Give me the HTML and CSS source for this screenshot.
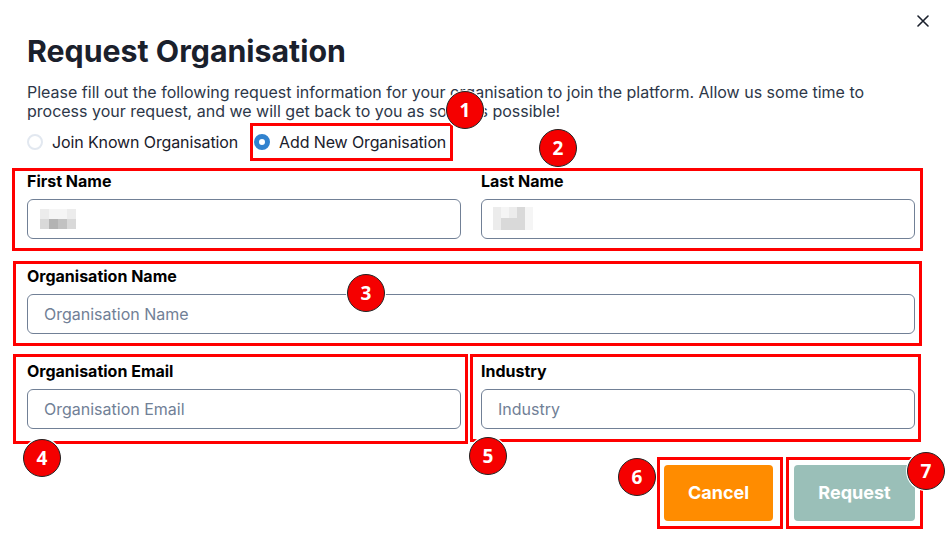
FILE: index.html
```html
<!DOCTYPE html>
<html lang="en">
<head>
<meta charset="utf-8">
<title>Request Organisation</title>
<link rel="stylesheet" href="styles.css">
</head>
<body>
<div class="modal">
  <button class="close" aria-label="Close">
    <svg width="12" height="12" viewBox="0 0 12 12"><path d="M1 1L11 11M11 1L1 11" stroke="#1a202c" stroke-width="1.6" stroke-linecap="round"/></svg>
  </button>
  <h1 class="title">Request Organisation</h1>
  <p class="desc">Please fill out the following request information for your organisation to join the platform. Allow us some time to process your request, and we will get back to you as soon as possible!</p>
  <div class="radios">
    <label class="radio"><span class="dot"></span>Join Known Organisation</label>
    <label class="radio checked"><span class="dot"></span>Add New Organisation</label>
  </div>
  <div class="grid">
    <div class="field">
      <div class="label">First Name</div>
      <div class="input"><span class="blur blur-a"><i class="c1"></i><i class="c0"></i><i class="c0"></i><i class="c1"></i><i class="c2"></i><i class="c4"></i><i class="c3"></i><i class="c2"></i></span></div>
    </div>
    <div class="field">
      <div class="label">Last Name</div>
      <div class="input"><span class="blur blur-b"><i class="c1"></i><i class="c0"></i><i class="c1"></i><i class="c2"></i><i class="c0"></i><i class="c1"></i><i class="c2"></i><i class="c2"></i><i class="c2"></i><i class="c0"></i></span></div>
    </div>
    <div class="field wide">
      <div class="label">Organisation Name</div>
      <div class="input"><span class="ph">Organisation Name</span></div>
    </div>
    <div class="field">
      <div class="label">Organisation Email</div>
      <div class="input"><span class="ph">Organisation Email</span></div>
    </div>
    <div class="field">
      <div class="label">Industry</div>
      <div class="input"><span class="ph">Industry</span></div>
    </div>
  </div>
  <div class="actions">
    <button class="btn cancel">Cancel</button>
    <button class="btn request">Request</button>
  </div>
</div>

<div class="anno box b1"></div>
<div class="anno box b2"></div>
<div class="anno box b3"></div>
<div class="anno box b4"></div>
<div class="anno box b5"></div>
<div class="anno box b6"></div>
<div class="anno box b7"></div>
<div class="anno num n1">1</div>
<div class="anno num n2">2</div>
<div class="anno num n3">3</div>
<div class="anno num n4">4</div>
<div class="anno num n5">5</div>
<div class="anno num n6">6</div>
<div class="anno num n7">7</div>
</body>
</html>
```
FILE: styles.css
```css
* { box-sizing: border-box; }
html, body { margin: 0; padding: 0; background: #fff; }
body {
  font-family: Inter, "Noto Sans", "Liberation Sans", sans-serif;
  color: #1a202c;
  width: 951px;
  height: 552px;
  overflow: hidden;
  position: relative;
}
.modal {
  position: relative;
  padding: 33px 36px 0 27px;
}
.close {
  position: absolute;
  top: 15px;
  left: 917px;
  width: 12px;
  height: 12px;
  padding: 0;
  border: 0;
  background: none;
  display: block;
}
.close svg { display: block; }
.title {
  margin: 0;
  font-size: 30.3px;
  line-height: 36px;
  font-weight: 700;
  color: #1a202c;
}
.desc {
  margin: 14px 0 0;
  font-size: 16px;
  line-height: 19px;
  color: #2d3748;
}
.radios {
  display: flex;
  gap: 16px;
  margin-top: 11px;
  height: 20px;
  align-items: center;
}
.radio {
  display: flex;
  align-items: center;
  gap: 9px;
  font-size: 16px;
  line-height: 20px;
  color: #1a202c;
  letter-spacing: -0.12px;
}
.dot {
  width: 16px;
  height: 16px;
  border-radius: 50%;
  border: 2px solid #e2e8f0;
  background: #fff;
  flex: none;
}
.radio.checked .dot {
  border: 5px solid #3182ce;
  background: #fff;
}
.grid {
  margin-top: 19px;
  display: grid;
  grid-template-columns: 1fr 1fr;
  column-gap: 20px;
  row-gap: 27px;
}
.field.wide { grid-column: 1 / 3; }
.label {
  font-size: 16px;
  line-height: 20px;
  font-weight: 700;
  color: #000;
  margin-bottom: 8px;
}
.input {
  height: 40px;
  border: 1px solid #718096;
  border-radius: 6px;
  display: flex;
  align-items: center;
  padding: 0 0 1px 16px;
  font-size: 16px;
}
.ph { color: #718096; }
.blur {
  display: grid;
  grid-template-rows: 10px 10px;
}
.blur-a {
  grid-template-columns: repeat(4, 9px);
  margin-left: -4px;
}
.blur-b {
  grid-template-columns: repeat(5, 8px);
  grid-template-rows: 11px 12px;
  margin-left: -5px;
}
.blur i { display: block; }
.c0 { background: #f5f5f5; }
.c1 { background: #ececec; }
.c2 { background: #d9d9d9; }
.c3 { background: #c2c2c2; }
.c4 { background: #b3b3b3; }
.actions {
  margin-top: 36px;
  display: flex;
  justify-content: flex-end;
  gap: 21px;
}
.btn {
  height: 56px;
  border: 0;
  border-radius: 4px;
  color: #fff;
  font-family: Inter, "Noto Sans", "Liberation Sans", sans-serif;
  font-size: 18px;
  font-weight: 700;
  padding: 0 0 1px;
}
.cancel { width: 109px; background: #ff8c00; }
.request { width: 121px; background: #9abfb8; }

/* annotation overlay */
.anno { position: absolute; }
.box { border: 3px solid #ff0000; }
.b1 { left: 250px; top: 123px; width: 203px; height: 38px; }
.b2 { left: 12px; top: 168px; width: 911px; height: 83px; }
.b3 { left: 13px; top: 261px; width: 909px; height: 85px; }
.b4 { left: 13px; top: 354px; width: 455px; height: 90px; }
.b5 { left: 470px; top: 354px; width: 451px; height: 88px; }
.b6 { left: 657px; top: 457px; width: 126px; height: 72px; }
.b7 { left: 786px; top: 457px; width: 137px; height: 72px; }
.num {
  width: 38px;
  height: 38px;
  border-radius: 50%;
  background: #f50000;
  border: 1px solid #222;
  box-shadow: 0 0 0 1px #fff;
  color: #fff;
  font-family: "Open Sans", "Noto Sans", sans-serif;
  font-weight: 700;
  font-size: 19px;
  display: flex;
  align-items: center;
  justify-content: center;
  line-height: 1;
}
.n1 { left: 446px; top: 91px; }
.n2 { left: 539px; top: 129px; }
.n3 { left: 347px; top: 274px; }
.n4 { left: 23px; top: 439px; }
.n5 { left: 469px; top: 437px; }
.n6 { left: 618px; top: 458px; }
.n7 { left: 907px; top: 452px; }
```
